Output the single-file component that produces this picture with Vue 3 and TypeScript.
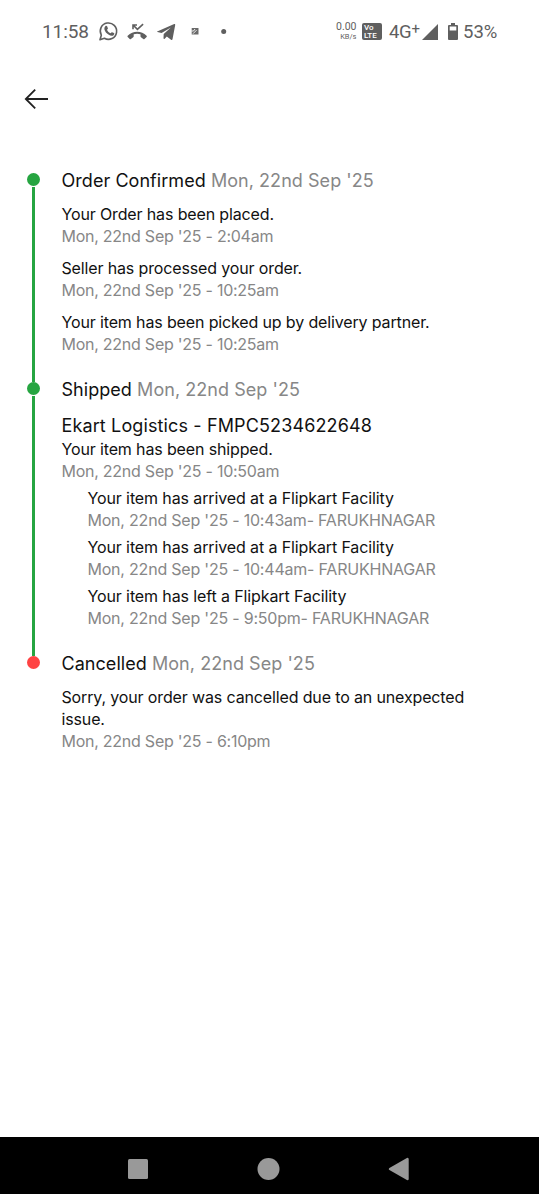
<script setup lang="ts">
interface Entry {
  text: string
  time: string
  indent?: boolean
}
interface Stage {
  key: string
  title: string
  date: string
  carrier?: string
  entries: Entry[]
}

const day = "Mon, 22nd Sep '25"
const stages: Stage[] = [
  {
    key: 'confirmed',
    title: 'Order Confirmed',
    date: day,
    entries: [
      { text: 'Your Order has been placed.', time: `${day} - 2:04am` },
      { text: 'Seller has processed your order.', time: `${day} - 10:25am` },
      { text: 'Your item has been picked up by delivery partner.', time: `${day} - 10:25am` },
    ],
  },
  {
    key: 'shipped',
    title: 'Shipped',
    date: day,
    carrier: 'Ekart Logistics - FMPC5234622648',
    entries: [
      { text: 'Your item has been shipped.', time: `${day} - 10:50am` },
      { text: 'Your item has arrived at a Flipkart Facility', time: `${day} - 10:43am- FARUKHNAGAR`, indent: true },
      { text: 'Your item has arrived at a Flipkart Facility', time: `${day} - 10:44am- FARUKHNAGAR`, indent: true },
      { text: 'Your item has left a Flipkart Facility', time: `${day} - 9:50pm- FARUKHNAGAR`, indent: true },
    ],
  },
  {
    key: 'cancelled',
    title: 'Cancelled',
    date: day,
    entries: [
      { text: 'Sorry, your order was cancelled due to an unexpected issue.', time: `${day} - 6:10pm` },
    ],
  },
]
</script>

<template>
  <div class="screen">
    <header class="status">
      <span class="clock">11:58</span>
      <svg class="notices" width="136" height="24" viewBox="98 20.5 136 24">
        <path d="M100 40.200l1.300-4.500a8.200 8.200 0 1 1 3.100 3.100z" fill="none" stroke="#5f5f5f" stroke-width="1.600" stroke-linejoin="round" />
        <path d="M105.300 26.800c.7-.8 1.500-.6 1.800 0l.8 1.900c.1.500-.5 1-.9 1.500.8 1.700 2 2.800 3.700 3.500.5-.5.9-1.200 1.400-1l1.900.9c.7.400.1 1.900-.7 2.400-1.500.8-3.300.1-4.900-.9-1.900-1.300-3.400-3.100-3.900-4.900-.3-1.300 0-2.500.8-3.400z" fill="#5f5f5f" />
        <path d="M127.700 36.300c5.200-5.300 13.800-5.300 18.900 0 .4.400.4.800 0 1.200l-2.100 2c-.4.400-.8.300-1.200 0l-2.300-1.700c-.5-.3-.5-.6-.5-1v-2.100c-2.200-.7-4.600-.7-6.800 0v2.100c0 .5-.1.800-.5 1l-2.300 1.700c-.4.300-.8.400-1.200 0l-2-2c-.4-.4-.4-.8 0-1.200z" fill="#5f5f5f" />
        <path d="M133 29.700V25.500h4M133.300 25.800l4.100 4 5.700-5.200" fill="none" stroke="#5f5f5f" stroke-width="1.600" />
        <path d="M157.200 32.100l17-7.500c.8-.3 1.100.1 1 .9l-2.700 14.200c-.2.900-.8 1-1.500.5l-4.200-3.100-2.100 2.100c-.6.600-1.200.3-1.200-.6l.2-4.100 7.200-6.600-9.300 5.700-4.200-1.200c-.5-.1-.5-.2-.2-.3z" fill="#5f5f5f" />
        <path d="M191.700 28.500h6.800v6.500h-6.800z" fill="#6a6a6a" />
        <path d="M191.500 31.500h2l1.500-2M193 34.200l3.500-3.500" fill="none" stroke="#fff" stroke-width=".9" />
        <circle cx="223.700" cy="32" r="2.500" fill="#5f5f5f" />
      </svg>
      <span class="rate"><span>0.00</span><span class="unit">KB/s</span></span>
      <span class="volte"><span>Vo</span><span>LTE</span></span>
      <span class="network">4G<sup>+</sup></span>
      <svg class="signal" width="16" height="16" viewBox="0 0 16 16"><path d="M0 16L16 0v16z" fill="#5f5f5f" /></svg>
      <svg class="battery" width="10" height="17" viewBox="0 0 10 17">
        <path d="M3 0h4v2h2a1 1 0 0 1 1 1v13a1 1 0 0 1-1 1H1a1 1 0 0 1-1-1V3a1 1 0 0 1 1-1h2zM1.700 3.500v4h6.600v-4z" fill="#5f5f5f" fill-rule="evenodd" />
      </svg>
      <span class="percent">53%</span>
    </header>

    <nav class="toolbar">
      <svg width="26" height="22" viewBox="0 0 26 22">
        <path d="M24 11H2M11.200 1.600L1.800 11l9.400 9.400" fill="none" stroke="#222" stroke-width="1.800" />
      </svg>
    </nav>

    <main class="timeline">
      <section v-for="stage in stages" :key="stage.key" class="stage" :class="stage.key">
        <div class="rail"><i class="dot"></i><i class="line"></i></div>
        <div class="content">
          <h2><span class="title">{{ stage.title }}</span> <span class="date">{{ stage.date }}</span></h2>
          <h3 v-if="stage.carrier">{{ stage.carrier }}</h3>
          <div v-for="(entry, i) in stage.entries" :key="i" class="entry" :class="{ indent: entry.indent }">
            <p>{{ entry.text }}</p>
            <p class="time">{{ entry.time }}</p>
          </div>
        </div>
      </section>
    </main>

    <footer class="navbar">
      <svg width="539" height="57" viewBox="0 0 539 57">
        <rect x="128" y="22" width="20" height="20" rx="1.500" fill="#999" />
        <circle cx="268.500" cy="32" r="11" fill="#999" />
        <path d="M390 32L407.500 22v20z" fill="#999" stroke="#999" stroke-width="2.400" stroke-linejoin="round" />
      </svg>
    </footer>
  </div>
</template>

<style scoped>
.screen {
  width: 539px;
  height: 1200px;
  display: flex;
  flex-direction: column;
  background: #fff;
  overflow: hidden;
  font-family: Inter, "Liberation Sans", sans-serif;
}
.status {
  height: 63px;
  box-sizing: border-box;
  padding-left: 42px;
  display: flex;
  align-items: center;
  flex: none;
  color: #5f5f5f;
  font-family: Roboto, sans-serif;
}
.clock { width: 56px; font-size: 19px; letter-spacing: -0.1px; }
.notices { flex: none; }
.rate {
  width: 24px;
  margin-left: 98.500px;
  display: flex;
  flex-direction: column;
  align-items: flex-end;
  font-size: 10.500px;
  line-height: 10px;
  white-space: nowrap;
}
.unit { font-size: 7.500px; }
.volte {
  width: 20px;
  height: 17px;
  margin-left: 5.500px;
  padding-left: 2px;
  box-sizing: border-box;
  border-radius: 2px;
  background: #5f5f5f;
  color: #fff;
  display: flex;
  flex-direction: column;
  justify-content: center;
  font-size: 8px;
  font-weight: 500;
  line-height: 7.500px;
}
.network { width: 33px; margin-left: 7px; font-size: 18.500px; letter-spacing: -0.3px; white-space: nowrap; }
.network sup { font-size: 15px; line-height: 0; vertical-align: 4px; }
.battery { margin-left: 9.500px; }
.percent { margin-left: 5.500px; font-size: 18.500px; }
.toolbar { height: 71px; padding: 25px 0 0 24px; box-sizing: border-box; flex: none; }
.toolbar svg { display: block; }
.timeline { flex: 1; padding-top: 34.700px; }
.stage { display: flex; }
.confirmed { height: 209px; }
.shipped { height: 274px; }
.rail {
  width: 13px;
  margin: 4px 21.300px 0 27.200px;
  display: flex;
  flex-direction: column;
  align-items: center;
}
.dot { width: 13px; height: 13px; border-radius: 50%; background: #26a541; flex: none; }
.line { width: 2.500px; flex: 1; margin: 1px 0 -4px; background: #26a541; }
.cancelled .dot { background: #ff4343; }
.cancelled .line { display: none; }
.content { width: 425px; }
h2, h3, p { margin: 0; font-weight: 400; color: #111; }
h2 { font-size: 18px; line-height: 24px; margin-bottom: 10px; letter-spacing: 0.050px; white-space: nowrap; }
.date { color: #878787; }
h3 { font-size: 18px; line-height: 24px; margin-top: 12px; letter-spacing: 0.130px; white-space: nowrap; }
p { font-size: 16px; line-height: 22px; letter-spacing: -0.140px; }
.entry { margin-bottom: 10px; }
.shipped .entry { margin-bottom: 5px; }
.indent { padding-left: 26px; }
.indent p { letter-spacing: -0.115px; }
.time { color: #878787; letter-spacing: -0.250px; }
.indent .time { letter-spacing: -0.210px; }
.navbar { height: 57px; margin-bottom: 6px; flex: none; background: #000; }
.navbar svg { display: block; }
</style>
